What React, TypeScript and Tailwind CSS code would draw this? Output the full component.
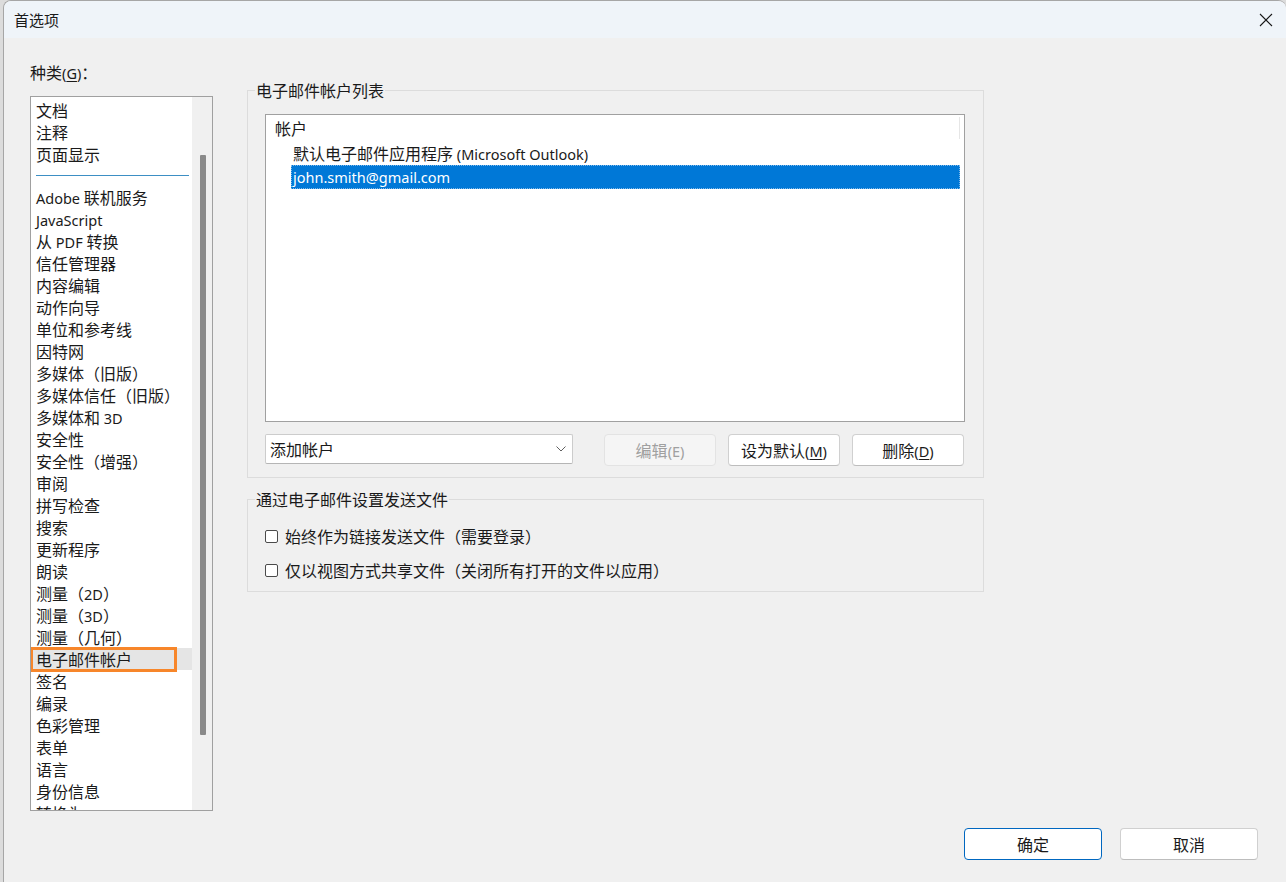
import React from "react";

const categories = [
  "文档",
  "注释",
  "页面显示",
  "-",
  "Adobe 联机服务",
  "JavaScript",
  "从 PDF 转换",
  "信任管理器",
  "内容编辑",
  "动作向导",
  "单位和参考线",
  "因特网",
  "多媒体（旧版）",
  "多媒体信任（旧版）",
  "多媒体和 3D",
  "安全性",
  "安全性（增强）",
  "审阅",
  "拼写检查",
  "搜索",
  "更新程序",
  "朗读",
  "测量（2D）",
  "测量（3D）",
  "测量（几何）",
  "电子邮件帐户",
  "签名",
  "编录",
  "色彩管理",
  "表单",
  "语言",
  "身份信息",
  "转换为 PDF",
];

const SELECTED = "电子邮件帐户";

const CJK = /([\u3000-\u9fff\uff00-\uffef]+)/;

// latin runs get a slightly smaller western face so widths match the dialog font
function Txt({ s }: { s: string }) {
  return (
    <>
      {s.split(CJK).map((part, i) =>
        !part ? null : CJK.test(part) ? (
          <React.Fragment key={i}>{part}</React.Fragment>
        ) : (
          <span key={i} className="text-[14.5px] [font-family:'Noto_Sans',sans-serif]">
            {part}
          </span>
        )
      )}
    </>
  );
}

function Lat({ children, u }: { children: React.ReactNode; u?: boolean }) {
  return (
    <span
      className={`text-[14.5px] [font-family:'Noto_Sans',sans-serif] ${
        u ? "underline underline-offset-2" : ""
      }`}
    >
      {children}
    </span>
  );
}

function Btn({
  children,
  disabled,
  primary,
  className = "",
}: {
  children: React.ReactNode;
  disabled?: boolean;
  primary?: boolean;
  className?: string;
}) {
  const tone = disabled
    ? "bg-[#f5f5f5] border-[#e3e3e3] text-[#a0a0a0]"
    : primary
    ? "bg-white border-[#0067c0] text-[#1a1a1a]"
    : "bg-white border-[#d0d0d0] border-b-[#bdbdbd] text-[#1a1a1a]";
  return (
    <button
      className={`h-[32px] rounded-[4px] border flex items-center justify-center text-[16px] leading-[20px] ${tone} ${className}`}
    >
      {children}
    </button>
  );
}

function Checkbox({ label }: { label: string }) {
  return (
    <label className="h-[24px] flex items-center gap-[7px]">
      <span className="w-[13px] h-[13px] rounded-[2px] border border-[#4a4a4a] bg-white" />
      <span>{label}</span>
    </label>
  );
}

export default function App() {
  return (
    <div className="w-[1286px] h-[882px] bg-[#dcdcdc] pl-[3px] flex text-[16px] leading-[20px] text-[#1a1a1a] [font-family:'Noto_Sans_CJK_SC',sans-serif]">
      <div className="flex-1 flex flex-col bg-[#f0f0f0] border-l border-t border-[#a6a6a6] rounded-tl-[8px] rounded-tr-[8px] overflow-hidden">
        {/* title bar */}
        <div className="h-[37px] shrink-0 bg-[#eff4f9] flex items-center pl-[10px] pr-[13px] justify-between">
          <span className="text-[15px]">首选项</span>
          <svg width="14" height="14" viewBox="0 0 14 14" className="mt-[1px]">
            <path d="M1 1 L13 13 M13 1 L1 13" stroke="#1a1a1a" strokeWidth="1.1" fill="none" />
          </svg>
        </div>

        {/* body */}
        <div className="flex-1 flex flex-col pt-[24px] pl-[26px] pr-[28px] pb-[22px]">
          <div className="flex gap-[34px]">
            {/* left: categories */}
            <div className="w-[183px] flex flex-col">
              <div className="h-[20px]">
                种类<Lat>(</Lat>
                <Lat u>G</Lat>
                <Lat>)</Lat>：
              </div>
              <div className="mt-[14px] h-[715px] border border-[#a0a0a0] bg-white flex overflow-hidden">
                <div className="w-[161px] pt-[2px] overflow-hidden">
                  {categories.map((c, i) =>
                    c === "-" ? (
                      <div key={i} className="h-[21px] flex items-center pl-[5px] pr-[3px]">
                        <div className="h-px w-full bg-[#3d8fc4] mt-[-1px]" />
                      </div>
                    ) : (
                      <div
                        key={i}
                        className={`relative h-[22px] pl-[5px] flex items-center whitespace-nowrap ${
                          c === SELECTED ? "bg-[#e5e5e5]" : ""
                        }`}
                      >
                        <span>
                          <Txt s={c} />
                        </span>
                        {c === SELECTED && (
                          <span className="absolute left-[-1px] top-[-1px] w-[147px] h-[25px] border-[3px] border-[#f7862a]" />
                        )}
                      </div>
                    )
                  )}
                </div>
                <div className="flex-1 bg-[#f0f0f0] pt-[58px] flex justify-center">
                  <div className="w-[6px] h-[580px] bg-[#8a8a8a] rounded-[1px] ml-[1px]" />
                </div>
              </div>
            </div>

            {/* right: settings */}
            <div className="w-[737px] pt-[18px] flex flex-col">
              <fieldset className="border border-[#dcdcdc] px-0 pb-[11px]">
                <legend className="ml-[7px] px-[1px] leading-[20px]">电子邮件帐户列表</legend>
                <div className="pt-[14px] pl-[17px]">
                  <div className="w-[700px] h-[308px] border border-[#a0a0a0] bg-white flex flex-col">
                    <div className="h-[26px] flex items-center">
                      <span className="flex-1 pl-[9px]">帐户</span>
                      <span className="w-px h-[22px] bg-[#e6e6e6] mr-[4px]" />
                    </div>
                    <div className="h-[24px] ml-[25px] mr-[4px] pl-[2px] flex items-center">
                      <span>
                        <Txt s="默认电子邮件应用程序 (Microsoft Outlook)" />
                      </span>
                    </div>
                    <div className="h-[24px] ml-[25px] mr-[4px] pl-[1px] flex items-center bg-[#0078d7] text-white border border-dotted border-[#7fb9ea]">
                      <Lat>john.smith@gmail.com</Lat>
                    </div>
                  </div>
                  <div className="mt-[12px] flex items-start">
                    <div className="w-[308px] h-[30px] bg-white border border-[#cccccc] border-b-[#b5b5b5] rounded-[2px] flex items-center justify-between pl-[4px] pr-[6px]">
                      <span>添加帐户</span>
                      <svg width="10" height="6" viewBox="0 0 10 6">
                        <path d="M0.5 0.5 L5 5 L9.5 0.5" stroke="#606060" strokeWidth="1" fill="none" />
                      </svg>
                    </div>
                    <Btn disabled className="w-[112px] ml-[31px]">
                      <span>
                        编辑<Lat>(E)</Lat>
                      </span>
                    </Btn>
                    <Btn className="w-[112px] ml-[12px]">
                      <span>
                        设为默认<Lat>(</Lat>
                        <Lat u>M</Lat>
                        <Lat>)</Lat>
                      </span>
                    </Btn>
                    <Btn className="w-[112px] ml-[12px]">
                      <span>
                        删除<Lat>(</Lat>
                        <Lat u>D</Lat>
                        <Lat>)</Lat>
                      </span>
                    </Btn>
                  </div>
                </div>
              </fieldset>

              <fieldset className="mt-[11px] border border-[#dcdcdc] px-0 pb-[9px]">
                <legend className="ml-[7px] px-[1px] leading-[20px]">通过电子邮件设置发送文件</legend>
                <div className="pt-[15px] pl-[17px] flex flex-col gap-[10px]">
                  <Checkbox label="始终作为链接发送文件（需要登录）" />
                  <Checkbox label="仅以视图方式共享文件（关闭所有打开的文件以应用）" />
                </div>
              </fieldset>
            </div>
          </div>

          {/* footer */}
          <div className="mt-[17px] flex justify-end gap-[18px]">
            <Btn primary className="w-[138px]">
              确定
            </Btn>
            <Btn className="w-[138px]">取消</Btn>
          </div>
        </div>
      </div>
    </div>
  );
}
